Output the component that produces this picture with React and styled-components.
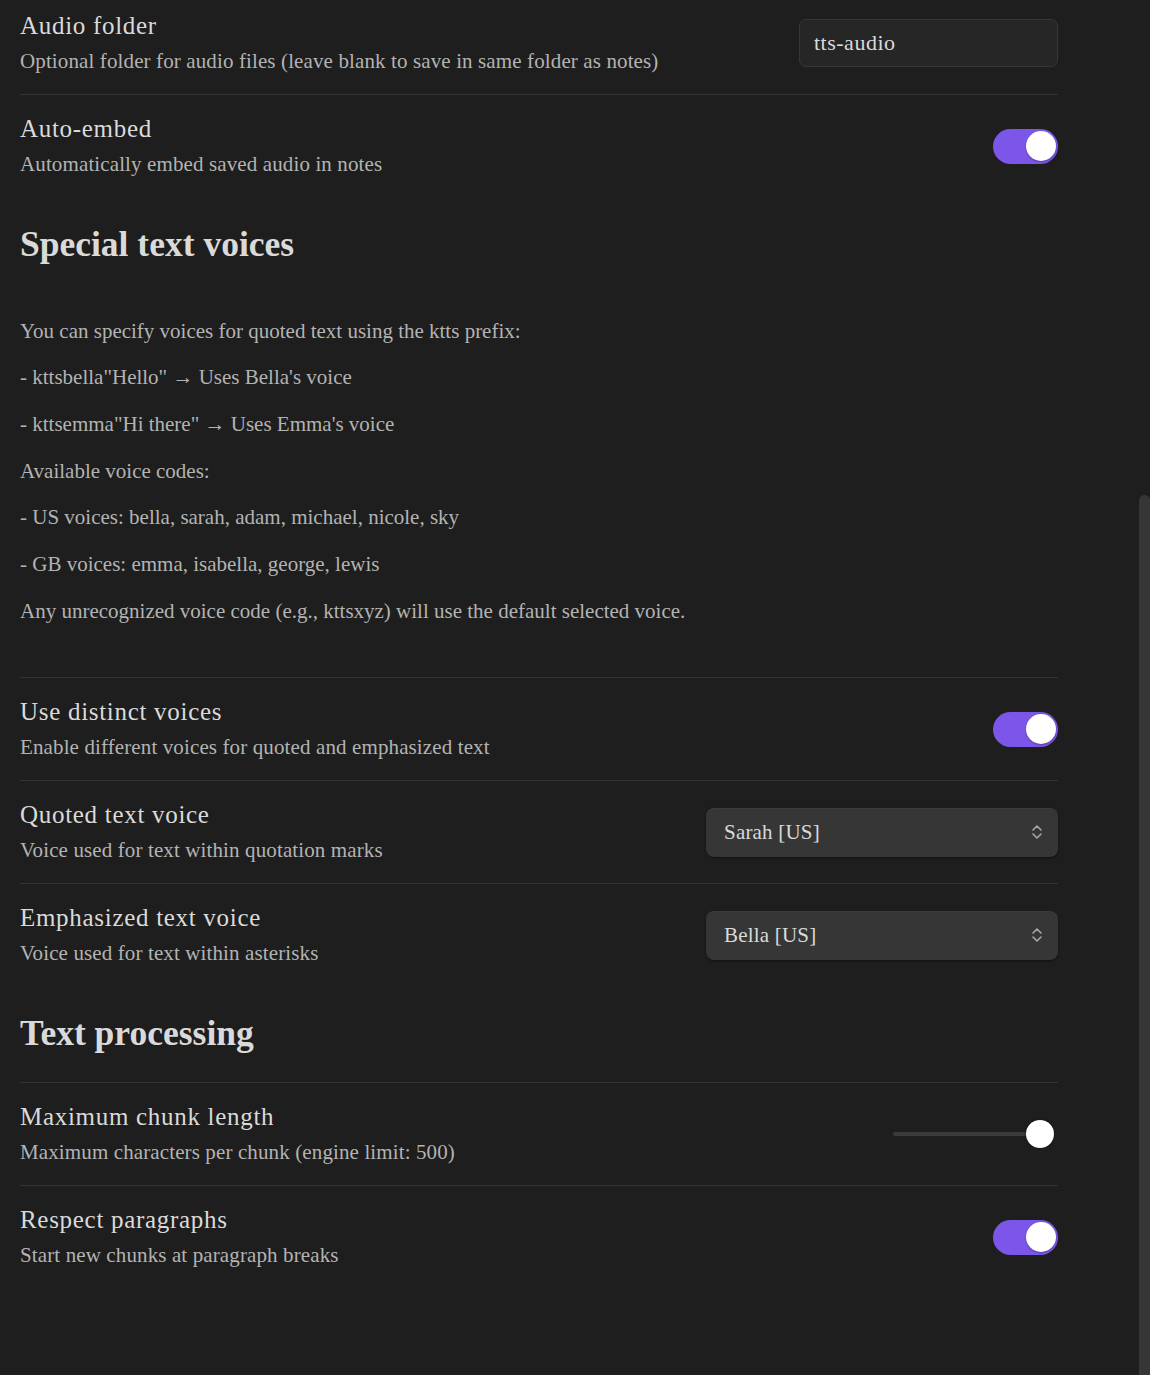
import React from "react";
import styled, { createGlobalStyle } from "styled-components";

const Global = createGlobalStyle`
  html, body { margin: 0; padding: 0; background: #1e1e1e; }
  body { font-family: "Liberation Serif", "Times New Roman", serif; color: #dadada; overflow: hidden; }
  * { box-sizing: border-box; }
`;

const Page = styled.div`
  width: 1150px;
  min-height: 1375px;
  background: #1e1e1e;
  padding: 0 92px 0 20px;
`;

const Row = styled.div`
  display: flex;
  align-items: center;
  gap: 24px;
  padding: ${(p) => (p.$first ? "11px" : "19px")} 0 19px;
  border-top: ${(p) => (p.$first ? "none" : "1px solid #333333")};
`;

const Info = styled.div`
  flex: 1;
  display: flex;
  flex-direction: column;
  gap: 6px;
`;

const Name = styled.div`
  font-size: 25px;
  line-height: 30px;
  letter-spacing: 0.7px;
  color: #dadada;
`;

const Desc = styled.div`
  font-size: 21px;
  line-height: 28px;
  letter-spacing: 0.12px;
  color: #b3b3b3;
`;

const Heading = styled.h3`
  margin: 0;
  padding: 26px 0 27px;
  font-size: 35.5px;
  line-height: 42.6px;
  font-weight: 700;
  color: #dadada;
`;

const Notes = styled.div`
  padding: 23px 0 35px;
`;

const Note = styled.p`
  margin: 0 0 15.2px;
  font-size: 21px;
  line-height: 31.5px;
  color: #b3b3b3;
`;

const TextInput = styled.div`
  width: 259px;
  height: 48px;
  border-radius: 7px;
  background: #262626;
  border: 1px solid #363636;
  display: flex;
  align-items: center;
  padding: 0 14px;
  font-size: 22px;
  letter-spacing: 0.5px;
  color: #dadada;
  flex-shrink: 0;
`;

const Toggle = styled.div`
  width: 65px;
  height: 35px;
  border-radius: 18px;
  background: ${(p) => (p.$on ? "#7c56e9" : "#3f3f3f")};
  display: flex;
  align-items: center;
  justify-content: ${(p) => (p.$on ? "flex-end" : "flex-start")};
  padding: 0 2.5px;
  flex-shrink: 0;
`;

const Knob = styled.div`
  width: 30px;
  height: 30px;
  border-radius: 50%;
  background: #ffffff;
  box-shadow: 0 1px 2px rgba(0, 0, 0, 0.3);
`;

const Select = styled.div`
  width: 352px;
  height: 49px;
  border-radius: 8px;
  background: #363636;
  box-shadow: 0 1px 2px rgba(0, 0, 0, 0.45), inset 0 1px 0 rgba(255, 255, 255, 0.03);
  display: flex;
  align-items: center;
  justify-content: space-between;
  padding: 0 14px 0 18px;
  font-size: 21px;
  letter-spacing: 0.2px;
  color: #dadada;
  flex-shrink: 0;
`;

const Slider = styled.div`
  width: 161px;
  height: 28px;
  margin-right: 4px;
  display: flex;
  align-items: center;
  position: relative;
  flex-shrink: 0;
`;

const Track = styled.div`
  flex: 1;
  height: 4px;
  border-radius: 2px;
  background: #3a3a3a;
`;

const Thumb = styled.div`
  position: absolute;
  right: 0;
  top: 0;
  width: 28px;
  height: 28px;
  border-radius: 50%;
  background: #ffffff;
  box-shadow: 0 0 2px rgba(0, 0, 0, 0.6);
`;

const ScrollThumb = styled.div`
  position: fixed;
  right: 0;
  top: 495px;
  bottom: 0;
  width: 11px;
  border-radius: 6px 6px 0 0;
  background: #363636;
`;

const Chevrons = () => (
  <svg width="14" height="20" viewBox="0 0 14 20" fill="none" stroke="#a8a8a8" strokeWidth="1.6" strokeLinecap="round" strokeLinejoin="round">
    <path d="M3 8 L7 4 L11 8" />
    <path d="M3 12 L7 16 L11 12" />
  </svg>
);

const Setting = ({ name, desc, first, children }) => (
  <Row $first={first}>
    <Info>
      <Name>{name}</Name>
      <Desc>{desc}</Desc>
    </Info>
    {children}
  </Row>
);

const notes = [
  "You can specify voices for quoted text using the ktts prefix:",
  '- kttsbella"Hello" → Uses Bella\'s voice',
  '- kttsemma"Hi there" → Uses Emma\'s voice',
  "Available voice codes:",
  "- US voices: bella, sarah, adam, michael, nicole, sky",
  "- GB voices: emma, isabella, george, lewis",
  "Any unrecognized voice code (e.g., kttsxyz) will use the default selected voice.",
];

export default function App() {
  return (
    <>
      <Global />
      <Page>
        <Setting first name="Audio folder" desc="Optional folder for audio files (leave blank to save in same folder as notes)">
          <TextInput>tts-audio</TextInput>
        </Setting>
        <Setting name="Auto-embed" desc="Automatically embed saved audio in notes">
          <Toggle $on><Knob /></Toggle>
        </Setting>

        <Heading>Special text voices</Heading>
        <Notes>
          {notes.map((n) => (
            <Note key={n}>{n}</Note>
          ))}
        </Notes>

        <Setting name="Use distinct voices" desc="Enable different voices for quoted and emphasized text">
          <Toggle $on><Knob /></Toggle>
        </Setting>
        <Setting name="Quoted text voice" desc="Voice used for text within quotation marks">
          <Select>
            <span>Sarah [US]</span>
            <Chevrons />
          </Select>
        </Setting>
        <Setting name="Emphasized text voice" desc="Voice used for text within asterisks">
          <Select>
            <span>Bella [US]</span>
            <Chevrons />
          </Select>
        </Setting>

        <Heading>Text processing</Heading>
        <Setting name="Maximum chunk length" desc="Maximum characters per chunk (engine limit: 500)">
          <Slider>
            <Track />
            <Thumb />
          </Slider>
        </Setting>
        <Setting name="Respect paragraphs" desc="Start new chunks at paragraph breaks">
          <Toggle $on><Knob /></Toggle>
        </Setting>
      </Page>
      <ScrollThumb />
    </>
  );
}
